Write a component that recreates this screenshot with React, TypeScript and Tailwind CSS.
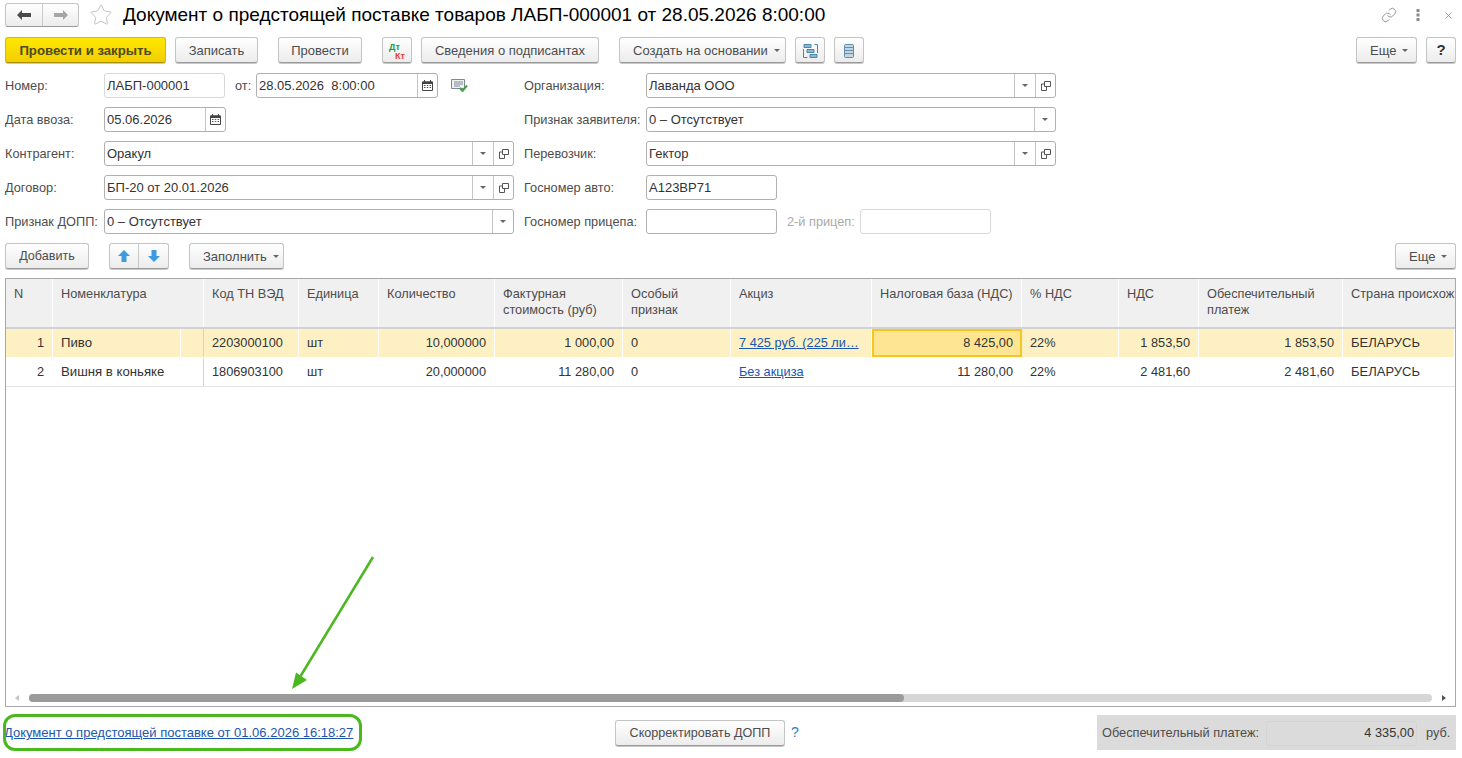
import React from 'react';
import { Star, Link as LinkIcon, X } from 'lucide-react';

const gridCols =
  'grid grid-cols-[47px_151px_95px_80px_116px_128px_108px_141px_150px_97px_80px_144px_112px]';

const Arrow = ({ color = '#666' }: { color?: string }) => (
  <svg width="6" height="3" viewBox="0 0 6 3" className="shrink-0">
    <path d="M0 0h6L3 3z" fill={color} />
  </svg>
);

const Btn = ({ children, w, menu = false }: { children: React.ReactNode; w: string; menu?: boolean }) => (
  <button
    className={`${w} h-[26px] shrink-0 flex items-center ${
      menu ? 'justify-start pl-[13px]' : 'justify-center'
    } gap-[6px] rounded-[3px] border border-[#c4c4c4] border-b-[#9a9a9a] bg-gradient-to-b from-white to-[#ececec] pt-[1px] text-[13px] text-[#4d4d4d] shadow-[0_1px_0_#c8c8c8]`}
  >
    {children}
    {menu && <Arrow />}
  </button>
);

const Calendar = () => (
  <svg width="11" height="11" viewBox="0 0 11 11">
    <path d="M0.5 2h10v8.500h-10z" fill="#fff" stroke="#444" />
    <path d="M0.500 1.500h10v2.500h-10z" fill="#444" />
    <path d="M2.500 0v2M8.500 0v2" stroke="#444" />
    <path d="M2 5.500h1.500M4.800 5.500h1.500M7.600 5.500h1.500M2 7.500h1.500M4.800 7.500h1.500M7.600 7.500h1.500" stroke="#555" />
  </svg>
);

const OpenIcon = () => (
  <svg width="10" height="10" viewBox="0 0 10 10" fill="none" stroke="#555">
    <path d="M3.500 0.500h6v5h-6z" />
    <path d="M3.500 3H0.500v6.500h5V6" />
  </svg>
);

const Field = ({
  value,
  w,
  drop = false,
  open = false,
  calendar = false,
  soft = false,
}: {
  value?: string;
  w: string;
  drop?: boolean;
  open?: boolean;
  calendar?: boolean;
  soft?: boolean;
}) => (
  <div
    className={`${w} h-[25px] shrink-0 flex items-center rounded-[3px] border bg-white text-[13px] text-[#333] ${
      soft ? 'border-[#d9d9d9]' : 'border-[#b0b0b0]'
    }`}
  >
    <span className="flex-1 pl-[2px] whitespace-pre">{value}</span>
    {calendar && (
      <span className="w-[20px] h-full flex items-center justify-center border-l border-[#c4c4c4]">
        <Calendar />
      </span>
    )}
    {drop && (
      <span className="w-[21px] h-full flex items-center justify-center border-l border-[#c4c4c4]">
        <Arrow />
      </span>
    )}
    {open && (
      <span className="w-[20px] h-full flex items-center justify-center border-l border-[#c4c4c4]">
        <OpenIcon />
      </span>
    )}
  </div>
);

const Label = ({ children, w }: { children: React.ReactNode; w: string }) => (
  <span className={`${w} shrink-0 pt-[1px] text-[12.75px] text-[#4d4d4d] whitespace-nowrap`}>{children}</span>
);

const headers: string[] = [
  'N',
  'Номенклатура',
  'Код ТН ВЭД',
  'Единица',
  'Количество',
  'Фактурная стоимость (руб)',
  'Особый признак',
  'Акциз',
  'Налоговая база (НДС)',
  '% НДС',
  'НДС',
  'Обеспечительный платеж',
];

type Row = {
  n: string;
  name: string;
  code: string;
  unit: string;
  qty: string;
  cost: string;
  sign: string;
  excise: string;
  base: string;
  pct: string;
  vat: string;
  pay: string;
  country: string;
};

const rows: Row[] = [
  {
    n: '1',
    name: 'Пиво',
    code: '2203000100',
    unit: 'шт',
    qty: '10,000000',
    cost: '1 000,00',
    sign: '0',
    excise: '7 425 руб. (225 ли…',
    base: '8 425,00',
    pct: '22%',
    vat: '1 853,50',
    pay: '1 853,50',
    country: 'БЕЛАРУСЬ',
  },
  {
    n: '2',
    name: 'Вишня в коньяке',
    code: '1806903100',
    unit: 'шт',
    qty: '20,000000',
    cost: '11 280,00',
    sign: '0',
    excise: 'Без акциза',
    base: '11 280,00',
    pct: '22%',
    vat: '2 481,60',
    pay: '2 481,60',
    country: 'БЕЛАРУСЬ',
  },
];

const Cell = ({ children, right = false, cls = 'border-r border-transparent' }: { children: React.ReactNode; right?: boolean; cls?: string }) => (
  <div className={`h-full flex items-center px-[8px] whitespace-nowrap overflow-hidden ${right ? 'justify-end' : ''} ${cls}`}>
    {children}
  </div>
);

const App = () => {
  return (
    <div className="w-[1462px] h-[758px] overflow-hidden bg-white relative pl-[5px] pr-[6px] pt-[3px] font-['Liberation_Sans',Arial,sans-serif] text-[#333]">
      {/* title */}
      <div className="h-[24px] flex items-center">
        <div className="w-[74px] h-[24px] flex rounded-[3px] border border-[#c4c4c4] border-b-[#9a9a9a] bg-gradient-to-b from-white to-[#ececec]">
          <span className="w-[37px] flex items-center justify-center border-r border-[#c8c8c8]">
            <svg width="14" height="10" viewBox="0 0 14 10">
              <path d="M0 5l5-5v3h9v4H5v3z" fill="#4a4a4a" />
            </svg>
          </span>
          <span className="flex-1 flex items-center justify-center">
            <svg width="14" height="10" viewBox="0 0 14 10">
              <path d="M14 5L9 0v3H0v4h9v3z" fill="#a6a6a6" />
            </svg>
          </span>
        </div>
        <Star size={24} strokeWidth={0.8} className="ml-[10px] text-[#b4b4b4]" />
        <h1 className="ml-[10px] text-[19px] text-black whitespace-nowrap">
          Документ о предстоящей поставке товаров ЛАБП-000001 от 28.05.2026 8:00:00
        </h1>
        <div className="ml-auto flex items-center text-[#666]">
          <LinkIcon size={16} strokeWidth={1} className="mr-[19px]" />
          <svg width="4" height="12" viewBox="0 0 4 12" className="mr-[23px]">
            <path d="M0.500 0h3v3h-3zM0.500 4.500h3v3h-3zM0.500 9h3v3h-3z" fill="#8a8a8a" />
          </svg>
          <X size={11} strokeWidth={1.2} className="mr-[2px]" />
        </div>
      </div>

      {/* toolbar */}
      <div className="mt-[10px] flex items-center">
        <button className="w-[161px] h-[26px] shrink-0 rounded-[3px] border border-[#d8b800] border-b-[#a89000] bg-gradient-to-b from-[#ffe800] to-[#f2ce00] pt-[1px] text-[13.2px] font-bold text-[#4d4a20] shadow-[0_1px_0_#c8c8c8]">
          Провести и закрыть
        </button>
        <div className="ml-[9px]">
          <Btn w="w-[83px]">Записать</Btn>
        </div>
        <div className="ml-[20px]">
          <Btn w="w-[84px]">Провести</Btn>
        </div>
        <div className="ml-[20px]">
          <Btn w="w-[30px]">
            <span className="relative block w-[22px] h-[18px] text-[9px] font-bold leading-[8px]">
              <span className="absolute left-[3px] top-[1px] text-[#1a9a4a]">Дт</span>
              <span className="absolute left-[9px] top-[10px] text-[#ea3a3a]">Кт</span>
            </span>
          </Btn>
        </div>
        <div className="ml-[9px]">
          <Btn w="w-[178px]">Сведения о подписантах</Btn>
        </div>
        <div className="ml-[20px]">
          <Btn w="w-[167px]" menu>
            Создать на основании
          </Btn>
        </div>
        <div className="ml-[9px]">
          <Btn w="w-[30px]">
            <svg width="15" height="14" viewBox="0 0 15 14" fill="none" stroke="#4a86ad">
              <path d="M0.500 5v8.500h4M14.500 9V0.500h-3" />
              <path d="M1 0.500h7v3H1z" fill="#8fb7d2" />
              <path d="M4 5.500h7v3H4z" fill="#8fb7d2" />
              <path d="M7 10.500h7v3H7z" fill="#8fb7d2" />
            </svg>
          </Btn>
        </div>
        <div className="ml-[9px]">
          <Btn w="w-[30px]">
            <svg width="10" height="14" viewBox="0 0 10 14" fill="#c3d5e1" stroke="#5f8fb0">
              <rect x="0.500" y="0.500" width="9" height="13" rx="1" />
              <path d="M0.500 3.500h9M0.500 6.500h9M0.500 9.500h9" fill="none" />
            </svg>
          </Btn>
        </div>
        <div className="ml-auto flex gap-[9px]">
          <Btn w="w-[61px]" menu>
            Еще
          </Btn>
          <Btn w="w-[30px]">
            <span className="font-bold text-[15px] text-[#333]">?</span>
          </Btn>
        </div>
      </div>

      {/* form */}
      <div className="mt-[10px] flex">
        <div className="w-[509px] flex flex-col gap-[9px]">
          <div className="flex items-center">
            <Label w="w-[99px]">Номер:</Label>
            <Field value="ЛАБП-000001" w="w-[121px]" soft />
            <span className="ml-[10px] w-[21px] pt-[1px] text-[12.75px] text-[#4d4d4d]">от:</span>
            <Field value="28.05.2026  8:00:00" w="w-[182px]" calendar />
            <svg width="17" height="13" viewBox="0 0 17 13" className="ml-[13px]">
              <path d="M0.500 0.500h13v9h-13z" fill="#eef1f2" stroke="#7d8a92" />
              <path d="M3 3h9M3 5h9M3 7h6" stroke="#7d8a92" />
              <path d="M9 9l2.500 3L16 6.500" fill="none" stroke="#3ea83e" strokeWidth="2" />
            </svg>
          </div>
          <div className="flex items-center">
            <Label w="w-[99px]">Дата ввоза:</Label>
            <Field value="05.06.2026" w="w-[122px]" calendar />
          </div>
          <div className="flex items-center">
            <Label w="w-[99px]">Контрагент:</Label>
            <Field value="Оракул" w="w-[410px]" drop open />
          </div>
          <div className="flex items-center">
            <Label w="w-[99px]">Договор:</Label>
            <Field value="БП-20 от 20.01.2026" w="w-[410px]" drop open />
          </div>
          <div className="flex items-center">
            <Label w="w-[99px]">Признак ДОПП:</Label>
            <Field value="0 – Отсутствует" w="w-[410px]" drop />
          </div>
        </div>
        <div className="ml-[10px] flex flex-col gap-[9px]">
          <div className="flex items-center">
            <Label w="w-[122px]">Организация:</Label>
            <Field value="Лаванда ООО" w="w-[410px]" drop open />
          </div>
          <div className="flex items-center">
            <Label w="w-[122px]">Признак заявителя:</Label>
            <Field value="0 – Отсутствует" w="w-[410px]" drop />
          </div>
          <div className="flex items-center">
            <Label w="w-[122px]">Перевозчик:</Label>
            <Field value="Гектор" w="w-[410px]" drop open />
          </div>
          <div className="flex items-center">
            <Label w="w-[122px]">Госномер авто:</Label>
            <Field value="А123ВР71" w="w-[131px]" />
          </div>
          <div className="flex items-center">
            <Label w="w-[122px]">Госномер прицепа:</Label>
            <Field w="w-[131px]" />
            <span className="ml-[10px] w-[73px] pt-[1px] text-[12.75px] text-[#aaa]">2-й прицеп:</span>
            <Field w="w-[131px]" soft />
          </div>
        </div>
      </div>

      {/* table commands */}
      <div className="mt-[9px] flex items-center">
        <Btn w="w-[84px]">
          <span className="text-[12.6px]">Добавить</span>
        </Btn>
        <div className="ml-[20px] w-[60px] h-[26px] flex rounded-[3px] border border-[#c4c4c4] border-b-[#9a9a9a] bg-gradient-to-b from-white to-[#ececec] shadow-[0_1px_0_#c8c8c8]">
          <span className="w-[29px] flex items-center justify-center border-r border-[#c8c8c8]">
            <svg width="12" height="12" viewBox="0 0 12 12">
              <path d="M6 0l6 6H8.500v6h-5V6H0z" fill="#3d9be0" />
            </svg>
          </span>
          <span className="flex-1 flex items-center justify-center">
            <svg width="12" height="12" viewBox="0 0 12 12">
              <path d="M6 12l6-6H8.500V0h-5v6H0z" fill="#3d9be0" />
            </svg>
          </span>
        </div>
        <div className="ml-[20px]">
          <Btn w="w-[95px]" menu>
            Заполнить
          </Btn>
        </div>
        <div className="ml-auto">
          <Btn w="w-[61px]" menu>
            Еще
          </Btn>
        </div>
      </div>

      {/* table */}
      <div className="mt-[9px] h-[429px] border border-[#a8a8a8] flex flex-col overflow-hidden text-[12.75px]">
        <div className={`${gridCols} h-[50px] shrink-0 bg-[#f0f0f0] border-b-2 border-[#d2d2d2] text-[#4d4d4d]`}>
          {headers.map((h) => (
            <div key={h} className="px-[8px] pt-[7px] leading-[16px] border-r border-white overflow-hidden">
              {h}
            </div>
          ))}
          <div className="pl-[8px] pt-[7px] leading-[16px] whitespace-nowrap">Страна происхож</div>
        </div>
        <div className="flex-1">
          {rows.map((r, i) => {
            const sel = i === 0;
            const line = sel ? 'border-r border-white' : 'border-r border-transparent';
            return (
              <div
                key={r.n}
                className={`${gridCols} h-[29px] border-b ${sel ? 'bg-[#fdf1c4] border-white' : 'bg-white border-[#e4e4e4]'}`}
              >
                <Cell right cls={line}>
                  {r.n}
                </Cell>
                <Cell cls="relative border-r border-[#d4d4d4]">
                  <span className="text-[13.2px]">{r.name}</span>
                  {sel && <span className="absolute left-[127px] top-0 bottom-0 w-px bg-white" />}
                </Cell>
                <Cell cls={line}>{r.code}</Cell>
                <Cell cls={line}>{r.unit}</Cell>
                <Cell right cls={line}>
                  {r.qty}
                </Cell>
                <Cell right cls={line}>
                  {r.cost}
                </Cell>
                <Cell cls={line}>{r.sign}</Cell>
                <Cell cls={line}>
                  <a className="text-[#1a56b0] underline">{r.excise}</a>
                </Cell>
                {sel ? (
                  <div className="h-full flex items-center justify-end px-[7px] bg-[#fde592] border-2 border-[#f7c61f]">
                    {r.base}
                  </div>
                ) : (
                  <Cell right cls={line}>
                    {r.base}
                  </Cell>
                )}
                <Cell cls={line}>{r.pct}</Cell>
                <Cell right cls={line}>
                  {r.vat}
                </Cell>
                <Cell right cls={line}>
                  {r.pay}
                </Cell>
                <Cell cls={line}>
                  <span className="text-[13px]">{r.country}</span>
                </Cell>
              </div>
            );
          })}
        </div>
        {/* scrollbar */}
        <div className="h-[8px] mb-[4px] shrink-0 flex items-center pl-[9px] pr-[9px]">
          <svg width="4" height="6" viewBox="0 0 4 6" className="shrink-0">
            <path d="M4 0v6L0 3z" fill="#c4c4c4" />
          </svg>
          <div className="ml-[10px] mr-[10px] flex-1 h-[8px] rounded-full bg-[#d6d6d6]">
            <div className="w-[875px] h-full rounded-full bg-[#9b9b9b]" />
          </div>
          <svg width="4" height="6" viewBox="0 0 4 6" className="shrink-0">
            <path d="M0 0v6l4-3z" fill="#555" />
          </svg>
        </div>
      </div>

      {/* footer */}
      <div className="mt-[8px] h-[35px] flex items-center text-[12.75px]">
        <a className="w-[610px] shrink-0 -ml-[1px] mr-[1px] pt-[1px] text-[13px] text-[#1a56b0] underline whitespace-nowrap">
          Документ о предстоящей поставке от 01.06.2026 16:18:27
        </a>
        <Btn w="w-[170px]">
          <span className="text-[12.6px]">Скорректировать ДОПП</span>
        </Btn>
        <span className="ml-[6px] text-[#1f7fc4] text-[14px]">?</span>
        <div className="ml-auto w-[359px] h-[35px] flex items-center bg-[#dbdbdb] pl-[5px] pt-[1px] text-[#4d4d4d]">
          <span className="w-[164px] shrink-0 whitespace-nowrap">Обеспечительный платеж:</span>
          <div className="w-[151px] h-[25px] flex items-center justify-end rounded-[3px] border border-[#d4d4d4] pr-[2px] text-[#333]">
            4 335,00
          </div>
          <span className="ml-[9px]">руб.</span>
        </div>
      </div>

      {/* annotations */}
      <div className="absolute left-[3px] top-[714px] w-[359px] h-[37px] rounded-[12px] border-[3px] border-[#4cb820] pointer-events-none" />
      <svg width="100" height="150" viewBox="0 0 100 150" className="absolute left-[285px] top-[550px] pointer-events-none">
        <path d="M88 7L15 127" stroke="#4cb820" strokeWidth="2.500" />
        <path d="M7 139l4-16.500L22 130z" fill="#4cb820" />
      </svg>
    </div>
  );
};

export default App;
